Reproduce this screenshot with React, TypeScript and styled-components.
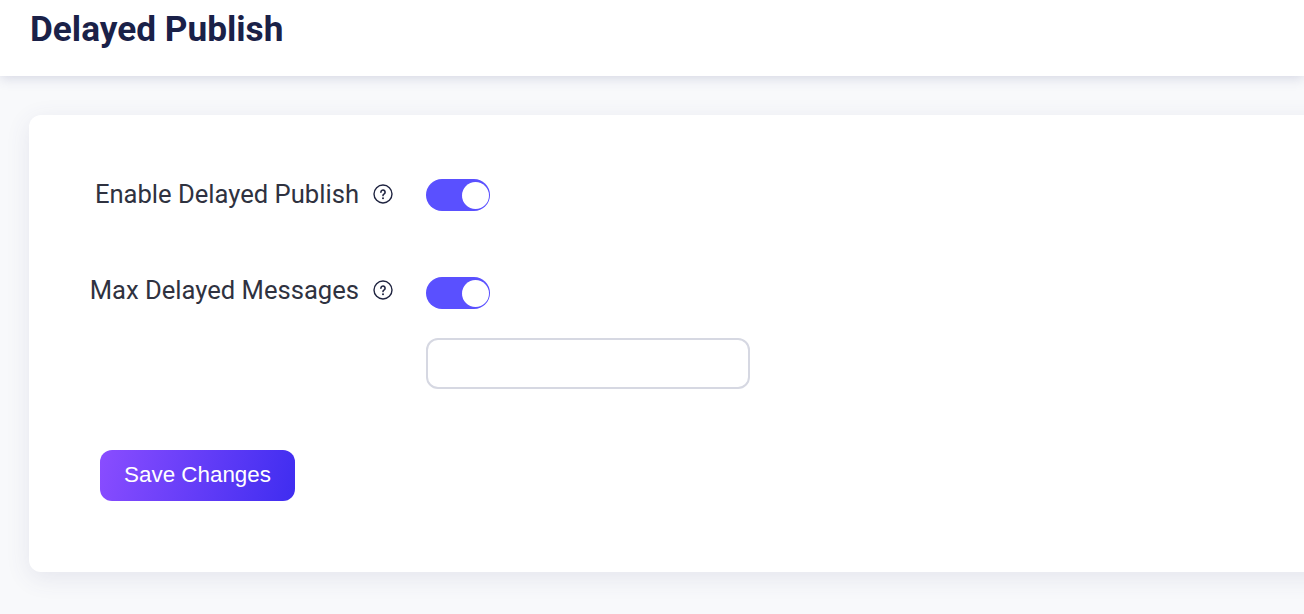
import React from "react";
import styled, { createGlobalStyle } from "styled-components";

const Global = createGlobalStyle`
  html, body { margin: 0; padding: 0; height: 100%; overflow: hidden; background: #f8f9fb; }
  #root { height: 100%; }
`;

const Page = styled.div`
  width: 1304px;
  height: 614px;
  overflow: hidden;
  background: #f8f9fb;
  font-family: Roboto, sans-serif;
`;

const Header = styled.header`
  height: 76px;
  box-sizing: border-box;
  padding: 9px 0 0 30px;
  background: #fff;
  box-shadow: 0 2px 12px rgba(70, 75, 130, 0.2);
`;

const Title = styled.h1`
  margin: 0;
  font-size: 35.2px;
  line-height: 40px;
  font-weight: 700;
  color: #1a2148;
`;

const Main = styled.main`
  padding: 39px 0 0 29px;
`;

const Card = styled.section`
  width: 1310px;
  height: 457px;
  box-sizing: border-box;
  padding: 64px 0 0 0;
  background: #fff;
  border-radius: 12px;
  box-shadow: 0 6px 24px rgba(70, 75, 130, 0.11);
`;

const Row = styled.div<{ $gap: number }>`
  display: grid;
  grid-template-columns: 364px auto;
  column-gap: 33px;
  margin-bottom: ${(p) => p.$gap}px;
`;

const Label = styled.div<{ $raise: number }>`
  display: flex;
  justify-content: flex-end;
  align-items: center;
  height: ${(p) => 32 - p.$raise}px;
  gap: 14px;
  font-size: 25.6px;
  color: #2f3240;
`;

const Help = styled.svg`
  width: 20px;
  height: 20px;
  flex: none;
`;

const Field = styled.div`
  display: flex;
  flex-direction: column;
  gap: 29px;
`;

const Switch = styled.div`
  width: 64px;
  height: 32px;
  box-sizing: border-box;
  padding: 2.5px 1.5px;
  border-radius: 16px;
  background: #5a50ff;
  display: flex;
  justify-content: flex-end;
`;

const Knob = styled.span`
  width: 27px;
  height: 27px;
  border-radius: 50%;
  background: #fff;
`;

const Input = styled.input`
  width: 324px;
  height: 51px;
  box-sizing: border-box;
  border: 2px solid #d6d8e2;
  border-radius: 12px;
  background: #fff;
  outline: none;
`;

const Save = styled.button`
  display: block;
  margin: 61px 0 0 71px;
  width: 195px;
  height: 51px;
  padding: 0 0 2px;
  border: none;
  border-radius: 12px;
  background: linear-gradient(105deg, #8a4dff 0%, #3f2df0 100%);
  color: #fff;
  font-family: "Liberation Sans", Arial, sans-serif;
  font-size: 22.4px;
`;

const HelpIcon = () => (
  <Help viewBox="0 0 20 20" fill="none">
    <circle cx="10" cy="10" r="9" stroke="#1f2440" strokeWidth="1.4" />
    <path
      d="M7.9 8.2a2.1 2.1 0 1 1 3.3 1.7c-.8.5-1.2.9-1.2 1.7"
      stroke="#1f2440"
      strokeWidth="1.6"
      strokeLinecap="round"
    />
    <circle cx="10" cy="14.2" r="1" fill="#1f2440" />
  </Help>
);

export default function App() {
  return (
    <Page>
      <Global />
      <Header>
        <Title>Delayed Publish</Title>
      </Header>
      <Main>
        <Card>
          <Row $gap={66}>
            <Label $raise={2}>
              Enable Delayed Publish
              <HelpIcon />
            </Label>
            <Switch>
              <Knob />
            </Switch>
          </Row>
          <Row $gap={0}>
            <Label $raise={6}>
              Max Delayed Messages
              <HelpIcon />
            </Label>
            <Field>
              <Switch>
                <Knob />
              </Switch>
              <Input />
            </Field>
          </Row>
          <Save>Save Changes</Save>
        </Card>
      </Main>
    </Page>
  );
}
